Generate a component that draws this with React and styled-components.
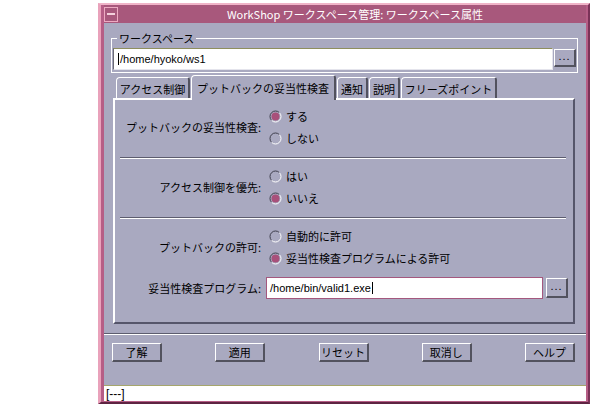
import React from "react"
import styled, { createGlobalStyle } from "styled-components"

const GlobalStyle = createGlobalStyle`
    html, body {
        margin: 0;
        padding: 0;
        background: #fff;
    }
    body {
        font-family: "Noto Sans CJK JP", "Liberation Sans", sans-serif;
        font-size: 11px;
        color: #000;
    }
`;

const Page = styled.div`
    width: 607px;
    height: 412px;
    padding: 3px 0 0 98px;
    box-sizing: border-box;
`;

const Window = styled.div`
    width: 492px;
    height: 401px;
    box-sizing: border-box;
    display: flex;
    flex-direction: column;
    background: #b65e86;
    border-top: 2px solid #f0b4c8;
    border-left: 3px solid #e9a2bb;
    border-right: 2px solid #7a3358;
    border-bottom: 2px solid #5e2442;
    padding: 0 2px 1px 3px;
`;

const TitleBar = styled.div`
    height: 18px;
    display: flex;
    align-items: center;
    background: #a8587c;
    color: #fff;
`;

const MenuButton = styled.div`
    width: 14px;
    height: 15px;
    box-sizing: border-box;
    border: 1px solid #eeaac2;
    display: flex;
    align-items: center;
    justify-content: center;
    &::before{
        content: "";
        width: 8px;
        height: 2px;
        background: #f4d0dc;
    }
`;

const Title = styled.div`
    flex: 1;
    text-align: center;
    line-height: 18px;
    padding-left: 6px;
    white-space: nowrap;
`;

const Body = styled.div`
    flex: 1;
    display: flex;
    flex-direction: column;
    background: #a9a9c0;
`;

const Group = styled.fieldset`
    margin: 8px 8px 0 7px;
    padding: 0 1px 2px 1px;
    border: 1px solid #fff;
    min-width: 0;
`;

const Legend = styled.legend`
    margin-left: 4px;
    padding: 0 2px;
    line-height: 14px;
    font-size: 11px;
`;

const FieldRow = styled.div`
    display: flex;
    align-items: flex-start;
    gap: ${({ gap }) => gap}px;
    margin-top: ${({ top }) => top}px;
`;

const TextField = styled.div`
    width: ${({ w }) => (w ? `${w}px` : "auto")};
    flex: ${({ w }) => (w ? "none" : 1)};
    height: 22px;
    box-sizing: border-box;
    display: flex;
    align-items: center;
    padding-left: 3px;
    background: #fff;
    font-family: "Liberation Sans", "Noto Sans CJK JP", sans-serif;
    font-size: 11px;
    ${({ focus }) => focus
        ? "border: 1px solid #a4587e;"
        : `border-top: 1px solid #8e8e5e;
           border-left: 1px solid #6c6c74;
           border-bottom: 1px solid #e4e4ec;
           border-right: 1px solid #e4e4ec;`}
`;

const Caret = styled.span`
    display: inline-block;
    width: 1px;
    height: 12px;
    margin: 0 1px;
    background: #000;
`;

const DotsButton = styled.div`
    width: 22px;
    height: ${({ h }) => h}px;
    margin-top: 1px;
    box-sizing: border-box;
    display: flex;
    align-items: center;
    justify-content: center;
    border-top: 1px solid #fff;
    border-left: 1px solid #fff;
    border-right: 2px solid #52525e;
    border-bottom: 2px solid #52525e;
    font-family: "Liberation Sans", sans-serif;
    font-size: 11px;
    letter-spacing: 1px;
    line-height: 1;
    padding-bottom: 3px;
`;

const TabBar = styled.div`
    display: flex;
    align-items: flex-end;
    height: 23px;
    margin: 2px 11px 0 12px;
    position: relative;
    z-index: 1;
`;

const Tab = styled.div`
    width: ${({ w }) => w}px;
    height: ${({ active }) => (active ? 25 : 21)}px;
    margin: 0 1px ${({ active }) => (active ? -2 : 0)}px 0;
    box-sizing: border-box;
    display: flex;
    align-items: ${({ active }) => (active ? "flex-start" : "center")};
    padding-top: ${({ active }) => (active ? 4 : 1)}px;
    justify-content: center;
    background: #a9a9c0;
    border-top: 1px solid #fff;
    border-left: 1px solid #fff;
    border-right: 2px solid #52525e;
    border-radius: 4px 3px 0 0;
    white-space: nowrap;
    font-size: 11px;
`;

const Panel = styled.div`
    height: 226px;
    margin: 0 11px 0 9px;
    box-sizing: border-box;
    display: flex;
    flex-direction: column;
    padding: 0 5px;
    border-top: 2px solid #fff;
    border-left: 2px solid #fff;
    border-right: 2px solid #55556a;
    border-bottom: 2px solid #55556a;
`;

const Section = styled.div`
    display: flex;
    align-items: center;
    padding: 6px 0 8px;
    &:first-child{
        padding-top: 5px;
    }
`;

const Label = styled.div`
    width: 141px;
    flex: none;
    text-align: right;
    white-space: nowrap;
    font-size: 11px;
`;

const Options = styled.div`
    display: flex;
    flex-direction: column;
    margin-left: 8px;
`;

const Option = styled.div`
    height: 22px;
    display: flex;
    align-items: center;
    gap: 4px;
    white-space: nowrap;
`;

const Separator = styled.div`
    flex: none;
    border-top: 1px solid #5c5c6e;
    border-bottom: 1px solid #fff;
    margin: ${({ inset }) => (inset ? "0 2px 0 0" : "0")};
`;

const ProgramRow = styled.div`
    display: flex;
    align-items: flex-start;
`;

const ProgramLabel = styled(Label)`
    line-height: 22px;
    margin-right: 5px;
`;

const BottomSeparator = styled(Separator)`
    margin-top: 9px;
`;

const ButtonBar = styled.div`
    flex: 1;
    display: flex;
    align-items: flex-start;
    justify-content: space-between;
    padding: 8px 11px 0 8px;
`;

const Button = styled.div`
    width: 50px;
    height: 19px;
    box-sizing: border-box;
    display: flex;
    align-items: center;
    justify-content: center;
    border-top: 1px solid #fff;
    border-left: 1px solid #fff;
    border-right: 2px solid #52525e;
    border-bottom: 2px solid #52525e;
    font-size: 11px;
    white-space: nowrap;
`;

const Status = styled.div`
    height: 16px;
    box-sizing: border-box;
    border-top: 1px solid #a6a66c;
    background: #fff;
    padding-left: 2px;
    display: flex;
    align-items: center;
    font-family: "Liberation Sans", sans-serif;
    font-size: 12px;
`;

const Radio = ({ on }) => (
    <svg width="13" height="13" viewBox="0 0 13 13">
        <path d="M2.61 10.39 A5.5 5.5 0 0 1 10.39 2.61" fill="none" stroke="#3e3e4c" strokeWidth="1" />
        <path d="M10.39 2.61 A5.5 5.5 0 0 1 2.61 10.39" fill="none" stroke="#fff" strokeWidth="1" />
        {on && <circle cx="6.5" cy="6.5" r="4" fill="#a8507a" />}
    </svg>
)

const tabs = [
    { label: "アクセス制御", w: 74 },
    { label: "プットバックの妥当性検査", w: 145, active: true },
    { label: "通知", w: 31 },
    { label: "説明", w: 31 },
    { label: "フリーズポイント", w: 96 },
]

const sections = [
    { label: "プットバックの妥当性検査:", options: ["する", "しない"], on: 0 },
    { label: "アクセス制御を優先:", options: ["はい", "いいえ"], on: 1 },
    { label: "プットバックの許可:", options: ["自動的に許可", "妥当性検査プログラムによる許可"], on: 1 },
]

const buttons = ["了解", "適用", "リセット", "取消し", "ヘルプ"]

const RadioGroup = ({ section }) => (
    <Options>
        {section.options.map((opt, i) => (
            <Option key={opt}>
                <Radio on={i === section.on} />
                {opt}
            </Option>
        ))}
    </Options>
)

const App = () => {
    return (
        <Page>
            <GlobalStyle />
            <Window>
                <TitleBar>
                    <MenuButton />
                    <Title>WorkShop ワークスペース管理: ワークスペース属性</Title>
                </TitleBar>
                <Body>
                    <Group>
                        <Legend>ワークスペース</Legend>
                        <FieldRow gap={1} top={3}>
                            <TextField><Caret />/home/hyoko/ws1</TextField>
                            <DotsButton h={18}>...</DotsButton>
                        </FieldRow>
                    </Group>
                    <TabBar>
                        {tabs.map(tab => (
                            <Tab key={tab.label} w={tab.w} active={tab.active}>{tab.label}</Tab>
                        ))}
                    </TabBar>
                    <Panel>
                        <Section>
                            <Label>{sections[0].label}</Label>
                            <RadioGroup section={sections[0]} />
                        </Section>
                        <Separator inset />
                        <Section>
                            <Label>{sections[1].label}</Label>
                            <RadioGroup section={sections[1]} />
                        </Section>
                        <Separator inset />
                        <Section>
                            <Label>{sections[2].label}</Label>
                            <RadioGroup section={sections[2]} />
                        </Section>
                        <ProgramRow>
                            <ProgramLabel>妥当性検査プログラム:</ProgramLabel>
                            <FieldRow gap={3} top={0}>
                                <TextField w={277} focus>/home/bin/valid1.exe<Caret /></TextField>
                                <DotsButton h={20}>...</DotsButton>
                            </FieldRow>
                        </ProgramRow>
                    </Panel>
                    <BottomSeparator />
                    <ButtonBar>
                        {buttons.map(b => (
                            <Button key={b}>{b}</Button>
                        ))}
                    </ButtonBar>
                    <Status>[---]</Status>
                </Body>
            </Window>
        </Page>
    )
}

export default App
